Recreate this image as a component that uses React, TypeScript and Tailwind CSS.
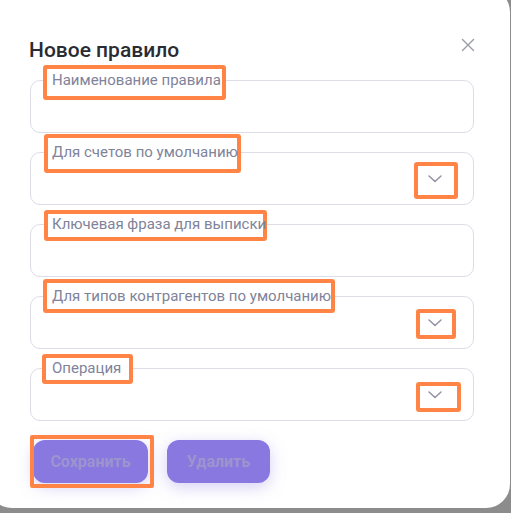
import React from "react";

const ORANGE = "border-[#ff8445]";

type F = {
  label: string;
  box: { left: number; top: number; w: number; h: number };
  chev?: { left: number; top: number; w: number; h: number };
};

const fields: F[] = [
  { label: "Наименование правила", box: { left: 12, top: -16, w: 183, h: 35 } },
  {
    label: "Для счетов по умолчанию",
    box: { left: 13, top: -19, w: 197, h: 39 },
    chev: { left: 383, top: 9, w: 44, h: 37 },
  },
  { label: "Ключевая фраза для выписки", box: { left: 13, top: -15, w: 223, h: 31 } },
  {
    label: "Для типов контрагентов по умолчанию",
    box: { left: 12, top: -18, w: 292, h: 34 },
    chev: { left: 385, top: 12, w: 40, h: 30 },
  },
  {
    label: "Операция",
    box: { left: 11, top: -15, w: 91, h: 30 },
    chev: { left: 385, top: 13, w: 45, h: 30 },
  },
];

function Chevron() {
  return (
    <svg width="14" height="8" viewBox="0 0 14 8" fill="none">
      <path d="M1 1L7 6.5L13 1" stroke="#8d8f9e" strokeWidth="1.4" strokeLinecap="round" strokeLinejoin="round" />
    </svg>
  );
}

function Field({ f }: { f: F }) {
  return (
    <div className="relative h-[53px] w-[444px] rounded-[10px] border border-[#dcdde8] bg-white">
      <div
        className={`absolute rounded-[3px] border-4 ${ORANGE} bg-white`}
        style={{ left: f.box.left, top: f.box.top, width: f.box.w, height: f.box.h }}
      />
      <span className="absolute left-[21px] top-[-10px] whitespace-nowrap text-[15px] leading-[18px] text-[#80839a]">
        {f.label}
      </span>
      {f.chev && (
        <>
          <div
            className={`absolute rounded-[3px] border-4 ${ORANGE}`}
            style={{ left: f.chev.left, top: f.chev.top, width: f.chev.w, height: f.chev.h }}
          />
          <div className="absolute right-[31px] top-[22px] flex h-[8px] w-[14px]">
            <Chevron />
          </div>
        </>
      )}
    </div>
  );
}

export default function App() {
  return (
    <div
      className="h-[513px] w-[511px] overflow-hidden bg-[#8c8c8c]"
      style={{ fontFamily: "Roboto, 'Noto Sans', sans-serif" }}
    >
      <div className="ml-[-12px] mt-[-12px] h-[520px] w-[522px] rounded-[24px] bg-white pl-[42px] pt-[49px]">
        <div className="flex w-[444px] items-start justify-between">
          <h1 className="ml-[-1px] text-[21px] font-medium leading-[26px] text-[#2a2b33]">Новое правило</h1>
          <svg className="mr-[-1px] mt-[1px]" width="14" height="14" viewBox="0 0 14 14" fill="none">
            <path d="M1.5 1.5L12.5 12.5M12.5 1.5L1.5 12.5" stroke="#9a9ca8" strokeWidth="1.4" strokeLinecap="round" />
          </svg>
        </div>
        <div className="mt-[17px] flex flex-col gap-[19px]">
          {fields.map((f, i) => (
            <Field key={i} f={f} />
          ))}
        </div>
        <div className="mt-[19px] flex gap-[19px] pl-[3px]">
          <div className="relative">
            <button className="h-[43px] w-[115px] rounded-[12px] bg-[#8878e0] text-[16px] font-bold text-[#9d94cf] shadow-[0_4px_16px_rgba(136,120,224,0.35)]">
              Сохранить
            </button>
            <div className={`pointer-events-none absolute left-[-3px] top-[-5px] h-[53px] w-[124px] rounded-[2px] border-4 ${ORANGE}`} />
          </div>
          <button className="h-[43px] w-[103px] rounded-[12px] bg-[#8878e0] text-[16px] font-bold text-[#9d94cf] shadow-[0_4px_16px_rgba(136,120,224,0.35)]">
            Удалить
          </button>
        </div>
      </div>
    </div>
  );
}
